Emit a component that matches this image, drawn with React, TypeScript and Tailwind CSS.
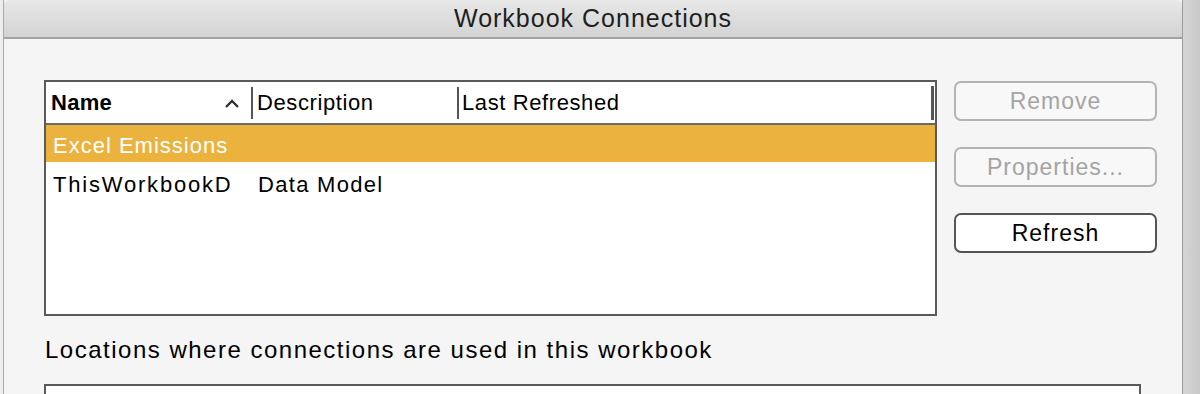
const font = { fontFamily: '"Liberation Sans", Arial, sans-serif' };

function Btn({ label, enabled }: { label: string; enabled?: boolean }) {
  return (
    <button
      className={
        enabled
          ? "flex h-[40px] w-[203px] items-center justify-center rounded-[7px] border-2 border-[#555555] bg-white text-[23px] tracking-[1px] text-black"
          : "flex h-[40px] w-[203px] items-center justify-center rounded-[7px] border-2 border-[#b4b4b4] bg-[#f8f8f8] text-[23px] tracking-[1px] text-[#a4a4a4]"
      }
    >
      {label}
    </button>
  );
}

export default function App() {
  return (
    <div className="flex h-[394px] w-[1200px] overflow-hidden bg-[#ececec]" style={font}>
      <div className="w-[3px] bg-[#eeeeee]" />
      <div className="flex w-[1179px] flex-col border-l border-[#a8a8a8] bg-[#f5f5f5]">
        <div className="flex h-[39px] items-center justify-center rounded-tl-[5px] rounded-tr-[5px] border-b-2 border-[#a2a2a2] bg-gradient-to-b from-[#e8e8e8] to-[#d3d3d3] pt-[1px] text-[25px] tracking-[1px] text-[#1e1e1e]">
          Workbook Connections
        </div>
        <div className="flex flex-col pl-[40px] pt-[41px]">
          <div className="flex gap-[17px]">
            <div className="flex h-[236px] w-[893px] flex-col border-2 border-[#5a5a5a] bg-white">
              <div className="flex h-[43px] items-center border-b-2 border-[#6a6a6a] text-[22px] tracking-[0.6px] text-black">
                <div className="flex w-[205px] items-center justify-between pl-[5px] pr-[11px] font-semibold">
                  <span className="tracking-[0.3px]">Name</span>
                  <svg width="16" height="11" viewBox="0 0 16 11" className="mt-[1px]">
                    <path d="M2 9 L8 3 L14 9" fill="none" stroke="#333" strokeWidth="2.4" />
                  </svg>
                </div>
                <div className="h-[32px] w-[2px] bg-[#555555]" />
                <div className="w-[204px] pl-[4px]">Description</div>
                <div className="h-[32px] w-[2px] bg-[#555555]" />
                <div className="flex-1 pl-[3px]">Last Refreshed</div>
                <div className="mr-[1px] h-[34px] w-[3px] bg-[#555555]" />
              </div>
              <div className="flex h-[37px] items-center bg-[#ebb23e] pl-[7px] pt-[3px] text-[22px] tracking-[1px] text-white">
                Excel Emissions
              </div>
              <div className="flex h-[41px] items-center pt-[3px] text-[22px] text-black">
                <div className="w-[212px] pl-[7px] tracking-[1.8px]">ThisWorkbookD</div>
                <div className="tracking-[1.3px]">Data Model</div>
              </div>
            </div>
            <div className="flex flex-col gap-[26px] pt-[1px]">
              <Btn label="Remove" />
              <Btn label="Properties..." />
              <Btn label="Refresh" enabled />
            </div>
          </div>
          <div className="pt-[16px] pl-[1px] text-[24px] tracking-[1.5px] text-black">
            Locations where connections are used in this workbook
          </div>
          <div className="mt-[16px] h-[60px] w-[1097px] border-2 border-[#5a5a5a] bg-white" />
        </div>
      </div>
      <div className="flex-1 border-l border-[#9a9a9a] bg-gradient-to-r from-[#d6d6d6] to-[#c8c8c8]" />
    </div>
  );
}
